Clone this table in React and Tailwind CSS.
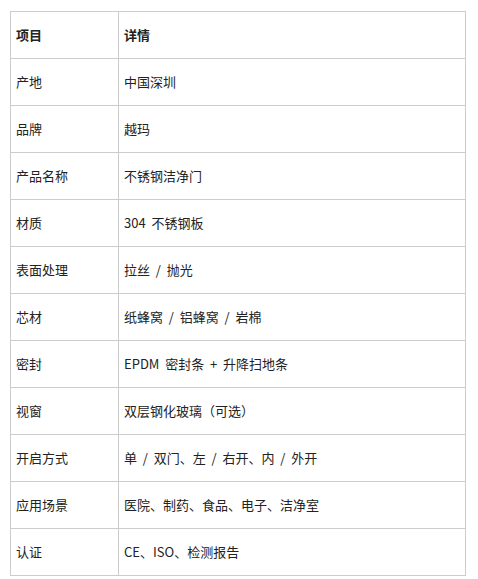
import React from 'react';

const rows = [
  ['产地', '中国深圳'],
  ['品牌', '越玛'],
  ['产品名称', '不锈钢洁净门'],
  ['材质', '304  不锈钢板'],
  ['表面处理', '拉丝  /  抛光'],
  ['芯材', '纸蜂窝  /  铝蜂窝  /  岩棉'],
  ['密封', 'EPDM  密封条  +  升降扫地条'],
  ['视窗', '双层钢化玻璃（可选）'],
  ['开启方式', '单  /  双门、左  /  右开、内  /  外开'],
  ['应用场景', '医院、制药、食品、电子、洁净室'],
  ['认证', 'CE、ISO、检测报告'],
];

export default function App() {
  return (
    <div className="bg-white w-[478px] h-[579px] pt-[11px] pl-[10px]" style={{ fontFamily: '"Noto Sans CJK SC", "Noto Sans", sans-serif' }}>
      <table className="border-collapse w-[456px] text-[13px] text-[#222]">
        <thead>
          <tr>
            <th className="border border-[#cccccc] h-[47px] w-[108px] px-[5px] text-left font-bold">项目</th>
            <th className="border border-[#cccccc] h-[47px] px-[5px] text-left font-bold">详情</th>
          </tr>
        </thead>
        <tbody>
          {rows.map(([k, v]) => (
            <tr key={k}>
              <td className="border border-[#cccccc] h-[47px] px-[5px]">{k}</td>
              <td className="border border-[#cccccc] h-[47px] px-[5px] whitespace-pre">{v}</td>
            </tr>
          ))}
        </tbody>
      </table>
    </div>
  );
}
